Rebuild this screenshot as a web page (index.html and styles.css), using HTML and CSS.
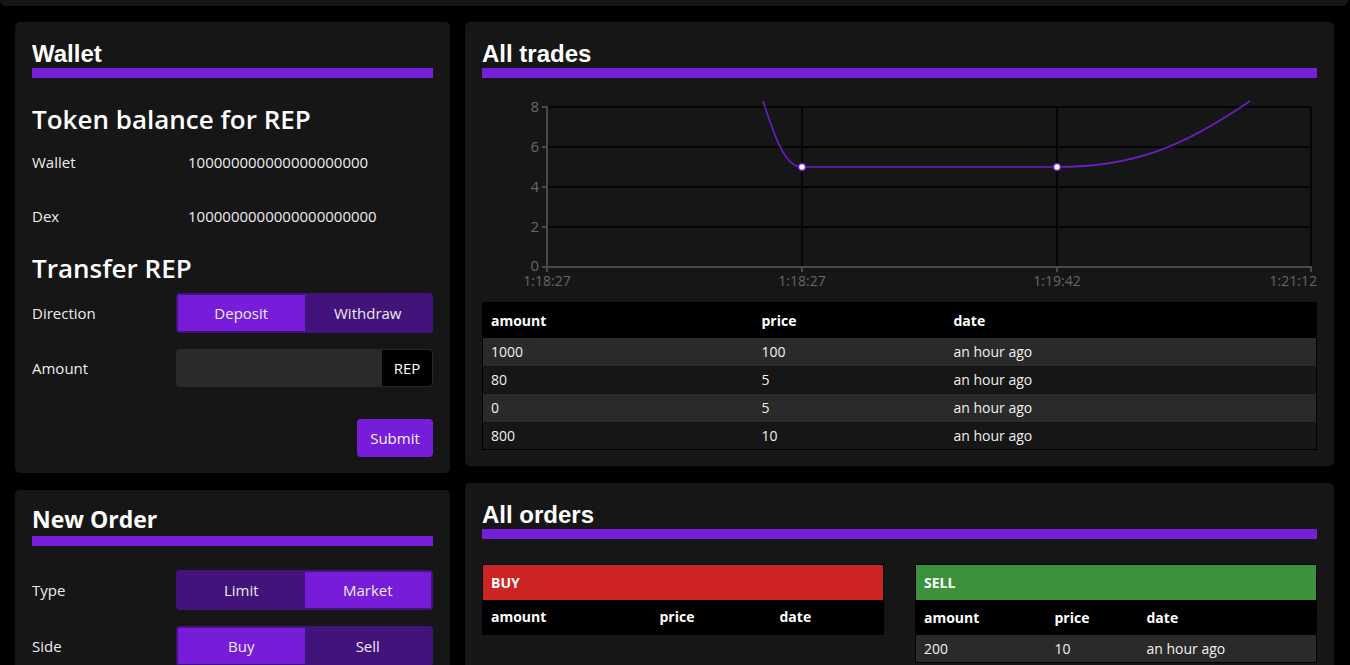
FILE: index.html
```html
<!DOCTYPE html>
<html lang="en">
<head>
<meta charset="utf-8">
<title>DEX</title>
<link rel="stylesheet" href="styles.css">
</head>
<body>
<div class="topbar"></div>
<main class="layout">
  <div class="col">
    <section class="card wallet">
      <h2 class="card-title">Wallet</h2>
      <div class="title-bar"></div>
      <h3 class="sub-title balance-title">Token balance for REP</h3>
      <div class="balance-row"><span class="balance-label">Wallet</span><span class="balance-value">100000000000000000000</span></div>
      <div class="balance-row"><span class="balance-label">Dex</span><span class="balance-value">1000000000000000000000</span></div>
      <h3 class="sub-title transfer-title">Transfer REP</h3>
      <div class="form-row">
        <span class="form-label">Direction</span>
        <div class="toggle"><button class="toggle-btn active">Deposit</button><button class="toggle-btn">Withdraw</button></div>
      </div>
      <div class="form-row input-row">
        <span class="form-label">Amount</span>
        <div class="input-group"><input class="amount-input" type="text"><span class="addon">REP</span></div>
      </div>
      <div class="submit-row"><button class="submit">Submit</button></div>
    </section>
    <section class="card new-order">
      <h2 class="card-title order-title">New Order</h2>
      <div class="title-bar order-bar"></div>
      <div class="form-row first-row">
        <span class="form-label">Type</span>
        <div class="toggle"><button class="toggle-btn">Limit</button><button class="toggle-btn active">Market</button></div>
      </div>
      <div class="form-row">
        <span class="form-label">Side</span>
        <div class="toggle"><button class="toggle-btn active">Buy</button><button class="toggle-btn">Sell</button></div>
      </div>
    </section>
  </div>
  <div class="col">
    <section class="card trades">
      <h2 class="card-title">All trades</h2>
      <div class="title-bar"></div>
      <svg class="chart" width="835" height="224" viewBox="0 0 835 224">
        <g class="grid">
          <line x1="65" y1="29" x2="829" y2="29"/>
          <line x1="65" y1="69" x2="829" y2="69"/>
          <line x1="65" y1="109" x2="829" y2="109"/>
          <line x1="65" y1="149" x2="829" y2="149"/>
          <line x1="320" y1="29" x2="320" y2="189"/>
          <line x1="575" y1="29" x2="575" y2="189"/>
          <line x1="829" y1="29" x2="829" y2="189"/>
        </g>
        <g class="axis">
          <line x1="65" y1="28" x2="65" y2="190"/>
          <line x1="64" y1="189" x2="830" y2="189"/>
          <line x1="60" y1="29" x2="65" y2="29"/>
          <line x1="60" y1="69" x2="65" y2="69"/>
          <line x1="60" y1="109" x2="65" y2="109"/>
          <line x1="60" y1="149" x2="65" y2="149"/>
          <line x1="60" y1="189" x2="65" y2="189"/>
          <line x1="65" y1="189" x2="65" y2="194"/>
          <line x1="320" y1="189" x2="320" y2="194"/>
          <line x1="575" y1="189" x2="575" y2="194"/>
          <line x1="829" y1="189" x2="829" y2="194"/>
        </g>
        <g class="ylabels">
          <text x="57" y="34">8</text>
          <text x="57" y="74">6</text>
          <text x="57" y="114">4</text>
          <text x="57" y="154">2</text>
          <text x="57" y="193">0</text>
        </g>
        <g class="xlabels">
          <text x="65" y="208">1:18:27</text>
          <text x="320" y="208">1:18:27</text>
          <text x="575" y="208">1:19:42</text>
          <text x="835" y="208" class="end">1:21:12</text>
        </g>
        <path class="line" d="M281,23 C293,60 303,89 320,89 L575,89 C650,89 700,70 768,23"/>
        <circle class="dot" cx="320" cy="89" r="3.5"/>
        <circle class="dot" cx="575" cy="89" r="3.5"/>
      </svg>
      <table class="data-table trades-table">
        <colgroup><col class="c-amount"><col class="c-price"><col></colgroup>
        <thead><tr><th>amount</th><th>price</th><th>date</th></tr></thead>
        <tbody>
          <tr><td>1000</td><td>100</td><td>an hour ago</td></tr>
          <tr><td>80</td><td>5</td><td>an hour ago</td></tr>
          <tr><td>0</td><td>5</td><td>an hour ago</td></tr>
          <tr><td>800</td><td>10</td><td>an hour ago</td></tr>
        </tbody>
      </table>
    </section>
    <section class="card orders">
      <h2 class="card-title">All orders</h2>
      <div class="title-bar"></div>
      <div class="order-books">
        <table class="data-table book buy-book">
          <colgroup><col class="b-amount"><col class="b-price"><col></colgroup>
          <thead>
            <tr><th colspan="3" class="side-head buy">BUY</th></tr>
            <tr><th>amount</th><th>price</th><th>date</th></tr>
          </thead>
          <tbody></tbody>
        </table>
        <table class="data-table book sell-book">
          <colgroup><col class="s-amount"><col class="s-price"><col></colgroup>
          <thead>
            <tr><th colspan="3" class="side-head sell">SELL</th></tr>
            <tr><th>amount</th><th>price</th><th>date</th></tr>
          </thead>
          <tbody>
            <tr><td>200</td><td>10</td><td>an hour ago</td></tr>
          </tbody>
        </table>
      </div>
    </section>
  </div>
</main>
</body>
</html>
```

FILE: styles.css
```css
* { box-sizing: border-box; }

html, body {
  margin: 0;
  background: #000;
  width: 1350px;
  height: 665px;
  overflow: hidden;
}

body {
  font-family: "Open Sans", "Noto Sans", sans-serif;
  font-size: 15px;
  color: #ececec;
}

.topbar {
  width: 1348px;
  height: 6px;
  background: #161616;
  border-radius: 0 0 6px 6px;
}

.layout {
  display: grid;
  grid-template-columns: 435px 869px;
  column-gap: 15px;
  padding: 16px 0 0 15px;
  align-items: start;
}

.col {
  display: flex;
  flex-direction: column;
  gap: 17px;
}

.card {
  background: #161616;
  border-radius: 5px;
  padding: 17px 17px 16px;
}

.new-order { min-height: 200px; }

.card-title {
  margin: 0;
  font: 700 24px/29px "Liberation Sans", Arial, sans-serif;
  color: #fff;
}

.order-title {
  font: 700 23px/25px "Open Sans", sans-serif;
}

.title-bar {
  height: 10px;
  background: #761fd8;
}

.order-bar { margin-top: 4px; }

.sub-title {
  margin: 0;
  font: 600 26px/34px "Open Sans", sans-serif;
  color: #fff;
}

.balance-title { margin: 24px 0 16px; }
.transfer-title { margin: 25px 0 8px; }

.balance-row {
  display: flex;
  line-height: 20px;
}

.balance-row + .balance-row { margin-top: 34px; }

.balance-label { width: 156px; }

.form-row {
  display: flex;
  align-items: center;
  height: 40px;
}

.form-row + .form-row { margin-top: 16px; }
.first-row { margin-top: 24px; }

.form-label { width: 144px; }

.toggle {
  flex: 1;
  display: flex;
  height: 40px;
  padding: 2px;
  background: #43137c;
  border-radius: 4px;
}

.toggle-btn {
  flex: 1;
  border: 0;
  background: transparent;
  color: #ececec;
  font: 15px "Open Sans", sans-serif;
  padding: 0;
}

.toggle-btn.active { background: #771dd9; }

.input-row { height: 38px; }

.input-group {
  flex: 1;
  display: flex;
  height: 38px;
  border-radius: 4px;
  overflow: hidden;
  background: #2a2a2a;
}

.amount-input {
  flex: 1;
  min-width: 0;
  border: 0;
  background: #2a2a2a;
  color: #fff;
  font: 15px "Open Sans", sans-serif;
  outline: none;
}

.addon {
  width: 52px;
  display: flex;
  align-items: center;
  justify-content: center;
  background: #000;
  border: 1px solid #2a2a2a;
  border-radius: 0 4px 4px 0;
  color: #fff;
}

.submit-row {
  display: flex;
  justify-content: flex-end;
  margin-top: 32px;
}

.submit {
  width: 76px;
  height: 38px;
  border: 0;
  border-radius: 4px;
  background: #771dd9;
  color: #f2f2f2;
  font: 15px "Open Sans", sans-serif;
}

.chart { display: block; }

.grid line { stroke: #050505; stroke-width: 2; }
.axis line { stroke: #4a4a4a; stroke-width: 2; }

.chart text {
  font-family: "Open Sans", sans-serif;
  font-size: 14px;
  fill: #666;
}

.ylabels text { text-anchor: end; font-size: 15px; }
.xlabels text { text-anchor: middle; }
.xlabels text.end { text-anchor: end; }

.line {
  fill: none;
  stroke: #6a1fc6;
  stroke-width: 1.6;
}

.dot {
  fill: #fff;
  stroke: #6a1fc6;
  stroke-width: 1.5;
}

.data-table {
  width: 100%;
  border-collapse: collapse;
  border: 1px solid #000;
  table-layout: fixed;
  font-size: 14px;
  color: #f0f0f0;
}

.data-table th {
  background: #000;
  color: #fff;
  font-weight: 700;
  text-align: left;
  height: 35px;
  padding: 0 8px;
}

.data-table td {
  height: 28px;
  padding: 0 8px;
  background: #161616;
}

.data-table tbody tr:nth-child(odd) td { background: #2a2a2a; }

.c-amount { width: 271px; }
.c-price { width: 192px; }

.order-books {
  display: flex;
  gap: 31px;
  margin-top: 25px;
  align-items: flex-start;
}

.book { width: 402px; }

.b-amount { width: 169px; }
.b-price { width: 120px; }
.s-amount { width: 131px; }
.s-price { width: 92px; }

.side-head.buy { background: #cc2424; }
.side-head.sell { background: #3c923c; }
```
